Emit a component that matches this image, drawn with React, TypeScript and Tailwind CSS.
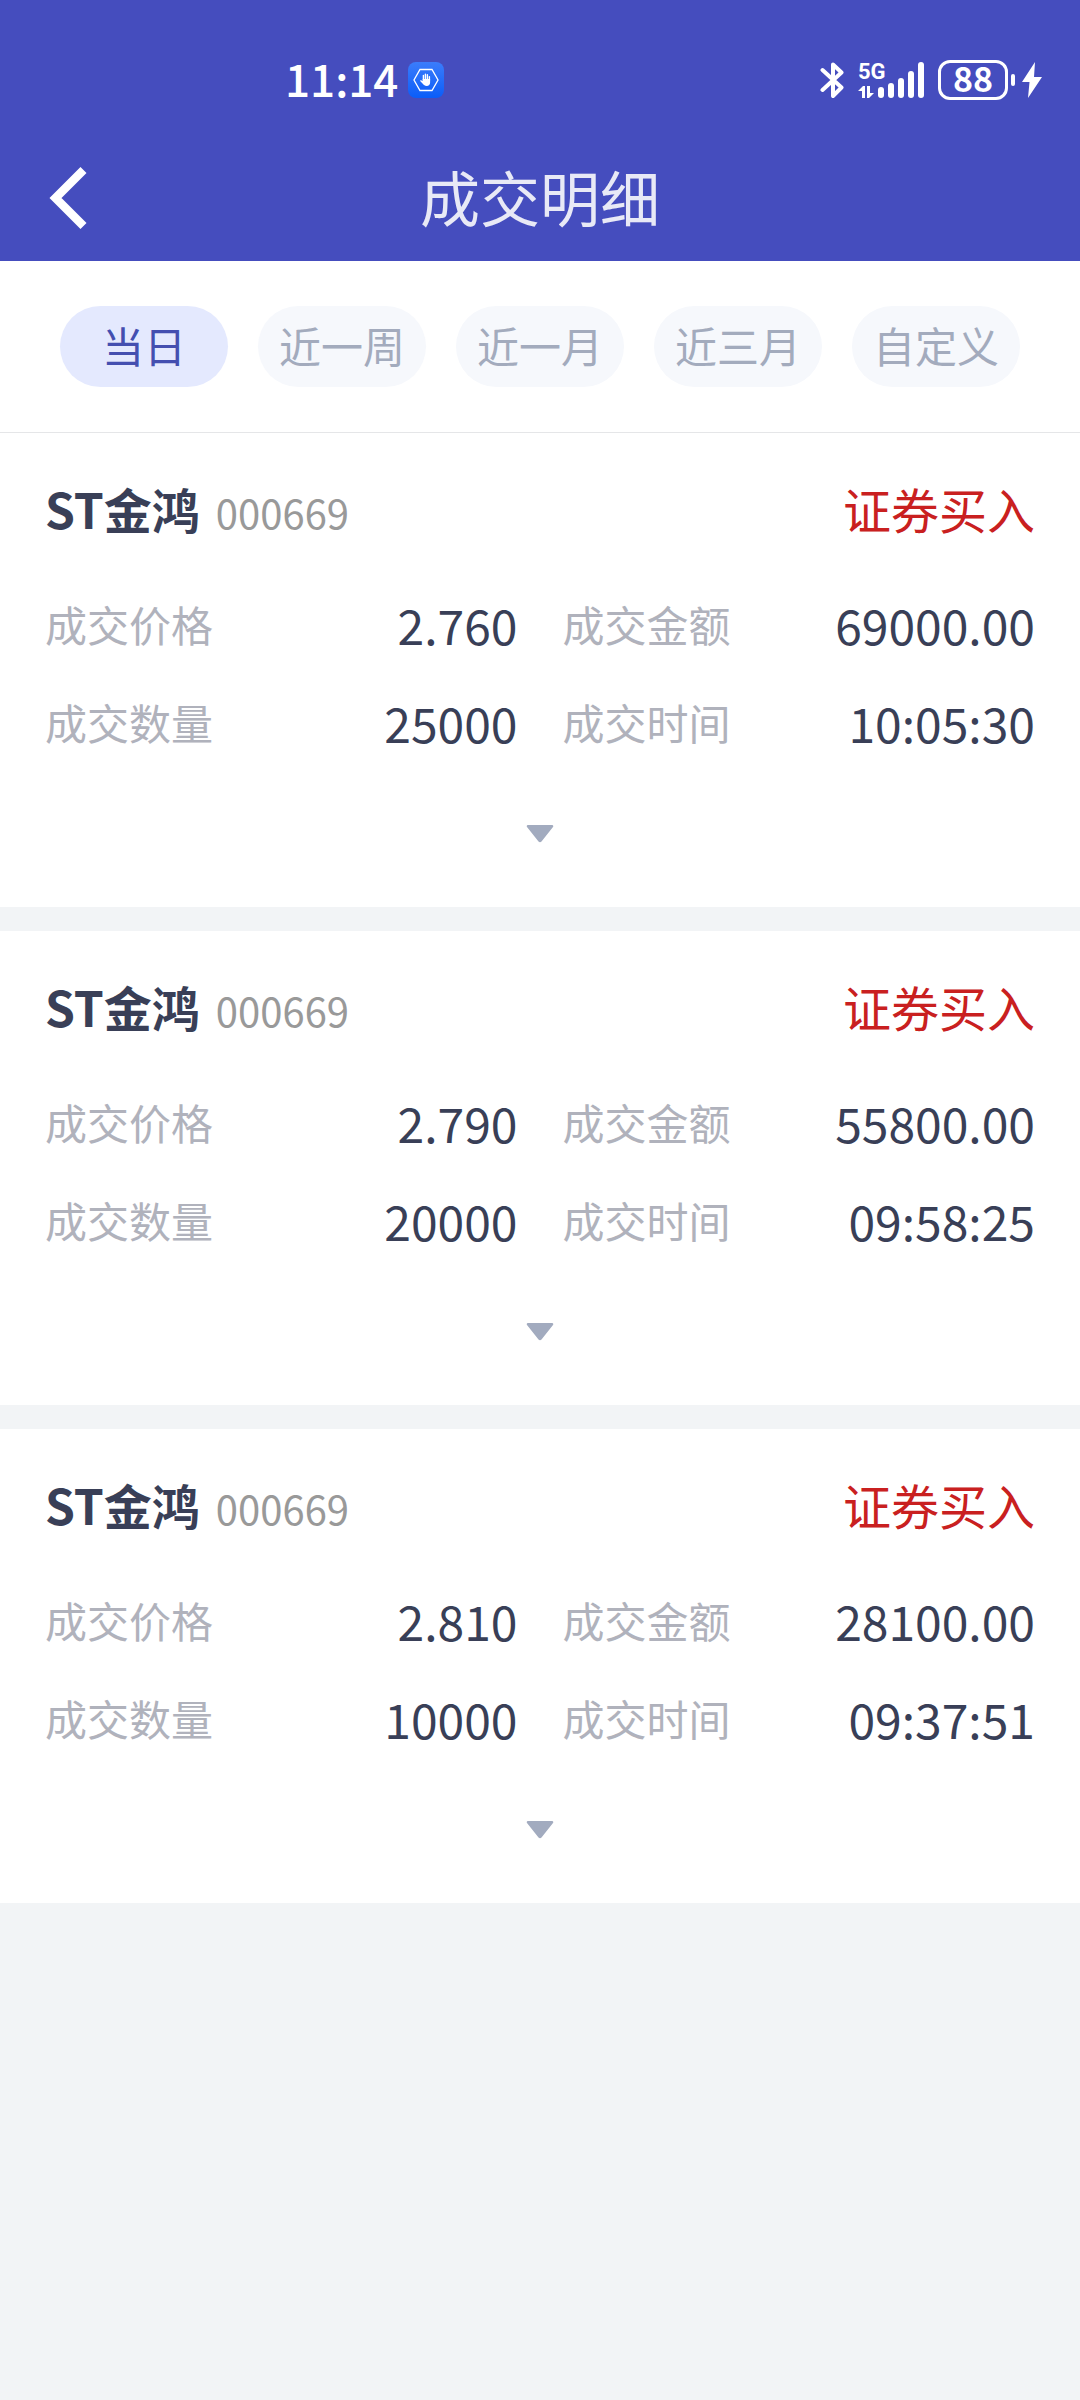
import { useState } from 'react';

type Deal = {
  id: number;
  name: string;
  code: string;
  side: string;
  price: string;
  amount: string;
  quantity: string;
  time: string;
};

const ranges = ['当日', '近一周', '近一月', '近三月', '自定义'];

const deals: Deal[] = [
  { id: 1, name: 'ST金鸿', code: '000669', side: '证券买入', price: '2.760', amount: '69000.00', quantity: '25000', time: '10:05:30' },
  { id: 2, name: 'ST金鸿', code: '000669', side: '证券买入', price: '2.790', amount: '55800.00', quantity: '20000', time: '09:58:25' },
  { id: 3, name: 'ST金鸿', code: '000669', side: '证券买入', price: '2.810', amount: '28100.00', quantity: '10000', time: '09:37:51' },
];

const StatusBar = () => (
  <div className="flex h-[42px] items-center justify-between pl-[285px] pr-[38px]">
    <div className="flex items-center gap-[10px]">
      <span className="pb-1 text-[44px] font-medium leading-[44px]">11:14</span>
      <svg className="size-9" viewBox="0 0 36 36" fill="none">
        <defs>
          <linearGradient id="appIcon" x1="0" y1="0" x2="0" y2="1">
            <stop stopColor="#3b7cfb" />
            <stop offset="1" stopColor="#0b5df8" />
          </linearGradient>
        </defs>
        <rect width="36" height="36" rx="8" fill="url(#appIcon)" />
        <path d="M12 7.5h12l6 10.500-6 10.500H12L6 18z" stroke="#fff" strokeWidth="1.3" />
        <path
          d="M15.4 18v-4.600M17.4 17.4v-5.200M19.400 17.6v-4.800M21.400 18.6v-4"
          stroke="#fff"
          strokeWidth="1.4"
          strokeLinecap="round"
        />
        <path d="M14.700 17h7.400v3.400c0 2-1.300 3.600-3.400 3.600-1.900 0-2.900-.8-3.700-1.900l-3.100-3.300c.6-.9 1.500-.7 2.800.2z" fill="#fff" />
      </svg>
    </div>

    <div className="flex items-center">
      {/* Bluetooth */}
      <svg className="h-[38px] w-6" viewBox="0 0 24 38" fill="none" stroke="#fff" strokeWidth="4" strokeLinecap="round" strokeLinejoin="round">
        <path d="M2.5 9 L21.5 26.5 L13 35 V3.5 L21.5 11.5 L2.5 29" />
      </svg>

      {/* Signal */}
      <div className="ml-[14px] flex h-9 items-end">
        <div className="flex h-9 w-5 flex-col justify-between">
          <span className="font-['Roboto',sans-serif] text-[22px] font-bold leading-[20px]">5G</span>
          <svg className="h-3 w-4" viewBox="0 0 16 12" fill="#fff">
            <path d="M0 5 5 0h2v12H4V5zM9 0h3v7h4l-5 5H9z" />
          </svg>
        </div>
        <svg className="h-9 w-[46px]" viewBox="0 0 46 36" fill="#fff">
          <rect x="0" y="25" width="6" height="11" rx="3" />
          <rect x="10" y="21" width="6" height="15" rx="3" />
          <rect x="20" y="16" width="6" height="20" rx="3" />
          <rect x="30" y="9" width="6" height="27" rx="3" />
          <rect x="40" y="0" width="6" height="36" rx="3" />
        </svg>
      </div>

      {/* Battery */}
      <div className="ml-[14px] flex h-10 w-[70px] items-center justify-center rounded-xl border-3 border-white">
        <span className="pb-1 text-[34px] font-bold leading-[34px]">88</span>
      </div>
      <span className="ml-[3px] h-3 w-1 rounded-sm bg-white" />
      <svg className="ml-[7px] h-9 w-5" viewBox="0 0 20 36" fill="#fff">
        <path d="M13 0 0 20h7.500L6 36 20 15h-8z" />
      </svg>
    </div>
  </div>
);

const Field = ({ label, value }: { label: string; value: string }) => (
  <div className="flex h-[98px] items-center justify-between">
    <dt className="text-[42px] leading-[48px] text-[#b0b2bc]">{label}</dt>
    <dd className="text-[48px] leading-[48px] text-[#393f57]">{value}</dd>
  </div>
);

const DealCard = ({ deal }: { deal: Deal }) => (
  <article className="bg-white px-[45px] pt-12 pb-[10px]">
    <div className="flex h-[54px] items-baseline justify-between leading-[54px]">
      <div className="flex items-baseline gap-4">
        <h2 className="text-[48px] font-bold text-[#393f57]">{deal.name}</h2>
        <span className="text-[40px] text-[#999999]">{deal.code}</span>
      </div>
      <span className="text-[48px] text-[#c92020]">{deal.side}</span>
    </div>

    <dl className="mt-10 grid grid-cols-2 gap-x-[45px]">
      <Field label="成交价格" value={deal.price} />
      <Field label="成交金额" value={deal.amount} />
      <Field label="成交数量" value={deal.quantity} />
      <Field label="成交时间" value={deal.time} />
    </dl>

    <button type="button" aria-label="展开" className="flex h-[126px] w-full items-center justify-center">
      <svg className="h-[18px] w-7" viewBox="0 0 28 18" fill="#a2abbf">
        <path d="M1.5 0h25q1.5.8.5 2L15.5 16.5q-1.500 1.500-3 0L1 2Q0 .8 1.5 0z" />
      </svg>
    </button>
  </article>
);

const App = () => {
  const [active, setActive] = useState('当日');

  return (
    <div className="min-h-screen bg-[#f2f4f6] font-['Noto_Sans_CJK_SC',sans-serif]">
      {/* Header */}
      <header className="bg-[#454dbe] pt-[59px] text-white">
        <StatusBar />
        <div className="mt-[34px] grid h-[126px] grid-cols-[1fr_auto_1fr] items-center px-12">
          <button type="button" aria-label="返回" className="justify-self-start">
            <svg className="h-16 w-10" viewBox="0 0 40 64" fill="none" stroke="#fff" strokeWidth="8.5">
              <path d="M35.5 4 7.5 32l28 28" />
            </svg>
          </button>
          <h1 className="pb-1 text-[60px] leading-[72px] text-[#e8e9f6]">成交明细</h1>
        </div>
      </header>

      {/* Date range */}
      <nav className="grid grid-cols-5 gap-[30px] border-b border-[#e5e6e8] bg-white px-[60px] py-[45px]">
        {ranges.map((range) => (
          <button
            key={range}
            type="button"
            aria-pressed={range === active}
            onClick={() => setActive(range)}
            className={`h-[81px] rounded-full pb-1 text-[42px] leading-[48px] ${
              range === active ? 'bg-[#e4e9fe] text-[#444fb0]' : 'bg-[#f6f8fc] text-[#a3abbd]'
            }`}
          >
            {range}
          </button>
        ))}
      </nav>

      {/* Deals */}
      <main className="flex flex-col gap-6">
        {deals.map((deal) => (
          <DealCard key={deal.id} deal={deal} />
        ))}
      </main>
    </div>
  );
};

export default App;
